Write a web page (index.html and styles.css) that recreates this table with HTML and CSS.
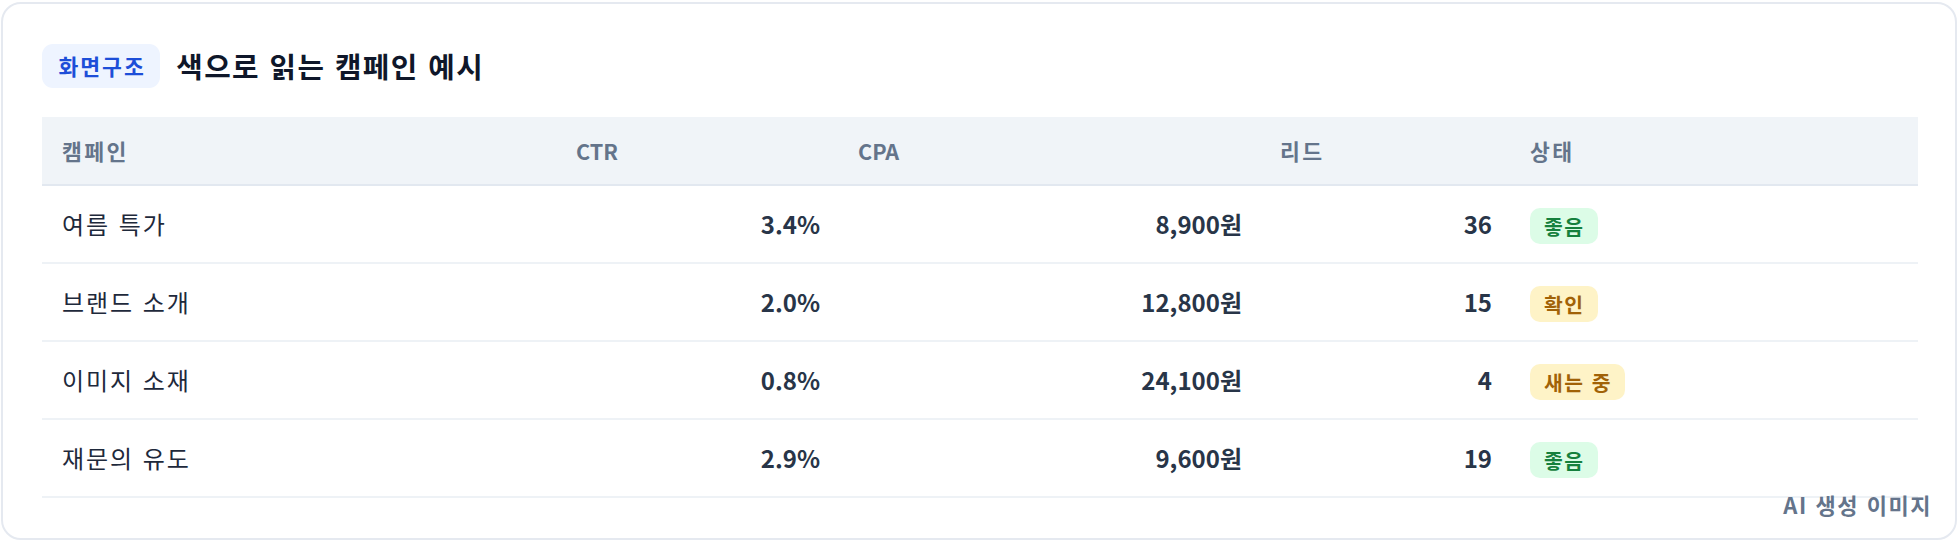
FILE: index.html
```html
<!DOCTYPE html>
<html lang="ko">
<head>
<meta charset="utf-8">
<title>색으로 읽는 캠페인 예시</title>
<link rel="stylesheet" href="styles.css">
</head>
<body>
<section class="card">
  <header class="card-head">
    <span class="tag">화면구조</span>
    <h1 class="title">색으로 읽는 캠페인 예시</h1>
  </header>
  <table class="grid">
    <colgroup>
      <col class="c-name">
      <col class="c-ctr">
      <col class="c-cpa">
      <col class="c-lead">
      <col class="c-state">
    </colgroup>
    <thead>
      <tr>
        <th class="ko">캠페인</th>
        <th>CTR</th>
        <th>CPA</th>
        <th class="ko">리드</th>
        <th class="ko">상태</th>
      </tr>
    </thead>
    <tbody>
      <tr>
        <td class="name">여름 특가</td>
        <td class="num">3.4%</td>
        <td class="num">8,900원</td>
        <td class="num">36</td>
        <td><span class="pill good">좋음</span></td>
      </tr>
      <tr>
        <td class="name">브랜드 소개</td>
        <td class="num">2.0%</td>
        <td class="num">12,800원</td>
        <td class="num">15</td>
        <td><span class="pill warn">확인</span></td>
      </tr>
      <tr>
        <td class="name">이미지 소재</td>
        <td class="num">0.8%</td>
        <td class="num">24,100원</td>
        <td class="num">4</td>
        <td><span class="pill warn">새는 중</span></td>
      </tr>
      <tr>
        <td class="name">재문의 유도</td>
        <td class="num">2.9%</td>
        <td class="num">9,600원</td>
        <td class="num">19</td>
        <td><span class="pill good">좋음</span></td>
      </tr>
    </tbody>
  </table>
  <div class="watermark">AI 생성 이미지</div>
</section>
</body>
</html>
```

FILE: styles.css
```css
* { box-sizing: border-box; }

html, body {
  margin: 0;
  padding: 0;
  background: #ffffff;
}

body {
  font-family: "Noto Sans CJK KR", "Noto Sans", sans-serif;
  color: #1e293b;
  padding: 2px 3px 2px 1px;
}

.card {
  position: relative;
  height: 538px;
  border: 2px solid #e5e9f0;
  border-radius: 20px;
  background: #ffffff;
  padding: 39px 37px 0 39px;
}

.card-head {
  display: flex;
  align-items: center;
  gap: 16px;
  height: 46px;
  margin-bottom: 28px;
}

.tag {
  display: inline-block;
  background: #eef4ff;
  color: #1d4ed8;
  font-size: 21.6px;
  font-weight: 700;
  line-height: 32px;
  letter-spacing: 0.09em;
  padding: 6px 14.5px 6px 16.5px;
  border-radius: 11px;
}

.title {
  margin: 0;
  font-size: 28.8px;
  font-weight: 700;
  color: #0f172a;
  line-height: 40px;
  letter-spacing: 0.05em;
}

.grid {
  width: 100%;
  table-layout: fixed;
  border-collapse: collapse;
}

.c-name { width: 514px; }
.c-ctr { width: 282px; }
.c-cpa { width: 422px; }
.c-lead { width: 250px; }
.c-state { width: 408px; }

.grid th {
  background: #f0f4f8;
  color: #64748b;
  font-size: 21.6px;
  font-weight: 700;
  text-align: left;
  line-height: 33px;
  height: 68px;
  padding: 0 18px 0 20px;
  border-bottom: 2px solid #e2e8f0;
}

.grid th.ko {
  letter-spacing: 0.11em;
}

.grid td {
  font-size: 24px;
  line-height: 36px;
  height: 78px;
  padding: 0 18px 0 20px;
  border-bottom: 2px solid #eef2f6;
  color: #1e293b;
  vertical-align: middle;
}

.grid td.name {
  letter-spacing: 0.08em;
}

.grid td.num {
  text-align: right;
  font-weight: 700;
  color: #283548;
}

.pill {
  display: inline-block;
  font-size: 20.4px;
  font-weight: 700;
  line-height: 28px;
  letter-spacing: 0.075em;
  padding: 4px 13px 4px 14px;
  border-radius: 10px;
  vertical-align: middle;
}

.pill.good {
  background: #dcfce7;
  color: #15803d;
}

.pill.warn {
  background: #fef3c7;
  color: #a16207;
}

.watermark {
  position: absolute;
  right: 23px;
  bottom: 19px;
  font-size: 22px;
  font-weight: 700;
  color: #64748b;
  line-height: 30px;
  letter-spacing: 0.07em;
}
```
